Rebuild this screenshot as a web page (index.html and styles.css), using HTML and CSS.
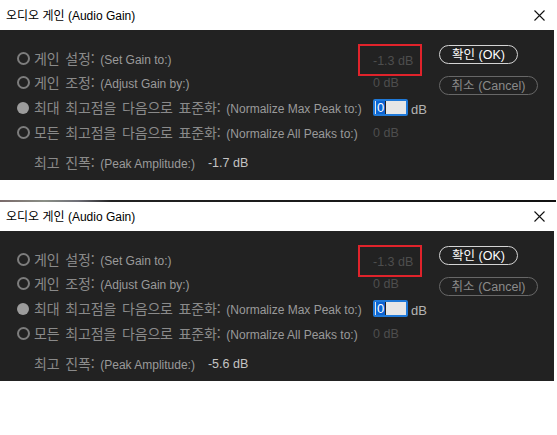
FILE: index.html
```html
<!DOCTYPE html>
<html lang="ko">
<head>
<meta charset="utf-8">
<title>오디오 게인</title>
<link rel="stylesheet" href="styles.css">
</head>
<body>
<div class="window">
  <div class="titlebar">
    <span class="title">오디오 게인 <span class="en">(Audio Gain)</span></span>
    <svg class="close" width="11" height="11" viewBox="0 0 11 11"><path d="M0.5 0.5L10.5 10.5M10.5 0.5L0.5 10.5" stroke="#111" stroke-width="1.1"/></svg>
  </div>
  <div class="body">
    <div class="options">
      <div class="row">
        <span class="radio"></span>
        <span class="label">게인 설정: <span class="en">(Set Gain to:)</span></span>
        <span class="value dim boxed">-1.3 dB<span class="redbox"></span></span>
      </div>
      <div class="row">
        <span class="radio"></span>
        <span class="label">게인 조정: <span class="en">(Adjust Gain by:)</span></span>
        <span class="value dim">0 dB</span>
      </div>
      <div class="row">
        <span class="radio on"></span>
        <span class="label">최대 최고점을 다음으로 표준화: <span class="en">(Normalize Max Peak to:)</span></span>
        <span class="value"><span class="input"><span class="sel">0</span></span><span class="unit">dB</span></span>
      </div>
      <div class="row">
        <span class="radio"></span>
        <span class="label">모든 최고점을 다음으로 표준화: <span class="en">(Normalize All Peaks to:)</span></span>
        <span class="value dim">0 dB</span>
      </div>
      <div class="row peak">
        <span class="label short">최고 진폭: <span class="en">(Peak Amplitude:)</span></span>
        <span class="amp">-1.7 dB</span>
      </div>
    </div>
    <div class="actions">
      <div class="btn ok">확인 <span class="en">(OK)</span></div>
      <div class="btn cancel">취소 <span class="en">(Cancel)</span></div>
    </div>
  </div>
</div>
<div class="gap"></div>
<div class="strip"></div>
<div class="window second">
  <div class="titlebar">
    <span class="title">오디오 게인 <span class="en">(Audio Gain)</span></span>
    <svg class="close" width="11" height="11" viewBox="0 0 11 11"><path d="M0.5 0.5L10.5 10.5M10.5 0.5L0.5 10.5" stroke="#111" stroke-width="1.1"/></svg>
  </div>
  <div class="body">
    <div class="options">
      <div class="row">
        <span class="radio"></span>
        <span class="label">게인 설정: <span class="en">(Set Gain to:)</span></span>
        <span class="value dim boxed">-1.3 dB<span class="redbox"></span></span>
      </div>
      <div class="row">
        <span class="radio"></span>
        <span class="label">게인 조정: <span class="en">(Adjust Gain by:)</span></span>
        <span class="value dim">0 dB</span>
      </div>
      <div class="row">
        <span class="radio on"></span>
        <span class="label">최대 최고점을 다음으로 표준화: <span class="en">(Normalize Max Peak to:)</span></span>
        <span class="value"><span class="input"><span class="sel">0</span></span><span class="unit">dB</span></span>
      </div>
      <div class="row">
        <span class="radio"></span>
        <span class="label">모든 최고점을 다음으로 표준화: <span class="en">(Normalize All Peaks to:)</span></span>
        <span class="value dim">0 dB</span>
      </div>
      <div class="row peak">
        <span class="label short">최고 진폭: <span class="en">(Peak Amplitude:)</span></span>
        <span class="amp">-5.6 dB</span>
      </div>
    </div>
    <div class="actions">
      <div class="btn ok">확인 <span class="en">(OK)</span></div>
      <div class="btn cancel">취소 <span class="en">(Cancel)</span></div>
    </div>
  </div>
</div>
</body>
</html>
```

FILE: styles.css
```css
html, body {
  margin: 0;
  padding: 0;
  background: #ffffff;
}
body {
  font-family: "Noto Sans CJK KR", "Liberation Sans", sans-serif;
}
.en {
  font-family: "Liberation Sans", "Noto Sans CJK KR", sans-serif;
}
.window {
  width: 554px;
}
.titlebar {
  height: 30px;
  background: #ffffff;
  display: flex;
  align-items: center;
  justify-content: space-between;
  padding: 0 10px 0 6px;
  box-sizing: border-box;
}
.second .titlebar {
  height: 29px;
}
.title {
  font-size: 12px;
  color: #000;
  line-height: 1;
}
.title .en {
  font-size: 12px;
}
.close {
  display: block;
  margin-right: -1px;
}
.body {
  height: 150px;
  background: #222222;
  display: flex;
}
.options {
  width: 439px;
  padding: 15px 0 0 17px;
  box-sizing: border-box;
  display: flex;
  flex-direction: column;
}
.row {
  height: 25px;
  display: flex;
  align-items: center;
}
.row:first-child {
  margin-top: 1px;
  height: 24px;
}
.row.peak {
  margin-top: 5px;
}
.radio {
  width: 13px;
  height: 13px;
  box-sizing: border-box;
  border: 2px solid #7d7d7d;
  border-radius: 50%;
  margin-right: 4px;
  flex-shrink: 0;
}
.radio.on {
  border: none;
  background: #9c9c9c;
  width: 12px;
  height: 12px;
  margin-right: 5px;
}
.label {
  width: 339px;
  flex-shrink: 0;
  color: #8a8a8a;
  font-size: 14px;
  letter-spacing: -0.15px;
  word-spacing: 2px;
  white-space: nowrap;
  line-height: 1;
}
.label .en {
  font-size: 12px;
  letter-spacing: 0;
  word-spacing: 0;
  color: #9a9a9a;
}
.label.short {
  width: auto;
  margin-left: 17px;
}
.value {
  font-family: "Liberation Sans", sans-serif;
  font-size: 12.5px;
  display: flex;
  align-items: center;
  position: relative;
}
.dim {
  color: #4e4e4e;
}
.redbox {
  position: absolute;
  left: -15px;
  top: -10px;
  width: 64px;
  height: 32px;
  border: 2px solid #e0232b;
  box-sizing: border-box;
}
.boxed {
  margin-top: 5px;
}
.input {
  width: 35px;
  height: 17px;
  box-sizing: border-box;
  border: 2px solid #1f79d8;
  border-radius: 2px;
  background: #e6e6e6;
  display: flex;
  align-items: center;
  padding-left: 1px;
}
.sel {
  background: #0b63d3;
  color: #ffffff;
  font-size: 13px;
  line-height: 13px;
  padding: 0 1px;
  border-right: 1px solid #222;
}
.unit {
  color: #b4b4b4;
  font-size: 13px;
  margin-left: 3px;
  margin-top: 3px;
}
.amp {
  font-family: "Liberation Sans", sans-serif;
  color: #c4c4c4;
  font-size: 12.5px;
  margin-left: 13px;
}
.actions {
  padding-top: 15px;
  display: flex;
  flex-direction: column;
  align-items: flex-start;
  gap: 12px;
}
.btn {
  height: 19px;
  box-sizing: border-box;
  border-radius: 10px;
  text-align: center;
  font-size: 12.5px;
  line-height: 16px;
  white-space: nowrap;
}
.btn .en {
  font-size: 12.5px;
}
.btn.ok {
  width: 79px;
  border: 1.5px solid #d4d4d4;
  color: #ffffff;
}
.btn.cancel {
  width: 99px;
  border: 1.5px solid #676767;
  color: #8a8a8a;
}
.gap {
  height: 20px;
}
.strip {
  width: 556px;
  height: 2px;
  background: linear-gradient(90deg, #7a6a6a 0%, #8a8f86 8%, #6f6f78 14%, #222 20%, #111 100%);
}
```
